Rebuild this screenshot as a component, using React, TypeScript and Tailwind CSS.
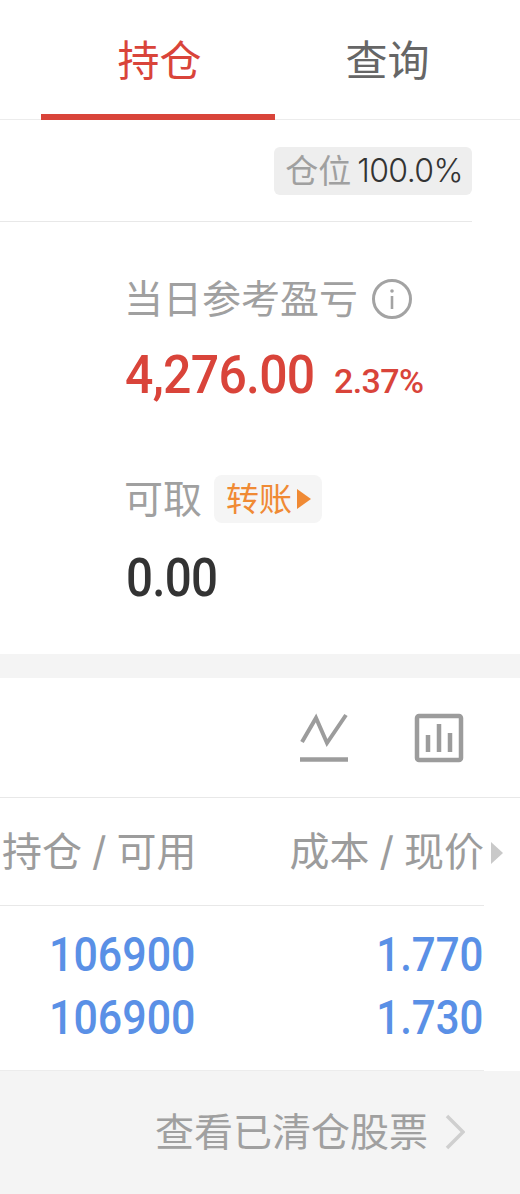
const cjk = "font-['Inter','Noto_Sans_CJK_SC',sans-serif]";
const num = "font-['Roboto','Noto_Sans',sans-serif]";

const InfoIcon = () => (
  <svg width="42" height="42" viewBox="0 0 42 42" fill="none" stroke="#a3a3a3">
    <circle cx="21" cy="21" r="18.5" strokeWidth="3" />
    <circle cx="21" cy="13" r="1.8" fill="#a3a3a3" stroke="none" />
    <path d="M21 18v13" strokeWidth="2.6" />
  </svg>
);

const LineIcon = () => (
  <svg width="50" height="50" viewBox="0 0 50 50" fill="none" stroke="#9c9c9c">
    <path d="M3 29 L17 5 L28 30 L47 2" strokeWidth="4" />
    <path d="M1 46.5h48" strokeWidth="4.5" />
  </svg>
);

const BarIcon = () => (
  <svg width="50" height="50" viewBox="0 0 50 50" fill="none" stroke="#9c9c9c">
    <rect x="3" y="3" width="44" height="44" rx="2" strokeWidth="4.5" />
    <path d="M14 22v17M25 11v28M36 20v19" strokeWidth="4.5" />
  </svg>
);

export default function App() {
  return (
    <div className={`w-[520px] h-[1194px] overflow-hidden bg-white flex flex-col ${cjk}`}>
      <div className="h-[120px] border-b border-[#ececec] flex pl-[41px]">
        <div className="w-[234px] h-[120px] border-b-[6px] border-[#d9443a] flex justify-center pt-[37px] pl-[3px] text-[42px] leading-[48px] text-[#d9443a]">
          持仓
        </div>
        <div className="w-[225px] flex justify-center pt-[37px] text-[42px] leading-[48px] text-[#666666]">
          查询
        </div>
      </div>

      <div className="w-[472px] h-[102px] border-b border-[#e8e8e8] flex justify-end items-start pt-[27px]">
        <div className="w-[198px] h-[48px] rounded-[6px] bg-[#eeeeee] flex items-center justify-center gap-[6px] pl-[2px] whitespace-nowrap">
          <span className="text-[33px] leading-[40px] text-[#a0a0a0]">仓位</span>
          <span className="text-[32px] leading-[40px] text-[#333333] font-light tracking-[-0.6px]">100.0%</span>
        </div>
      </div>

      <div className="h-[432px] pl-[126px] pt-[56px]">
        <div className="flex items-center gap-[13px] h-[42px]">
          <span className="text-[39px] leading-[42px] text-[#a0a0a0] -ml-[2px]">当日参考盈亏</span>
          <InfoIcon />
        </div>
        <div className={`flex items-baseline mt-[25px] h-[60px] text-[#d9443a] ${num}`}>
          <span className="inline-block origin-left scale-x-[0.925] w-[189px] whitespace-nowrap text-[54px] leading-[60px] font-medium tracking-[-0.8px] -ml-[1px]">4,276.00</span>
          <span className="text-[34px] leading-[60px] font-medium tracking-[-0.6px] ml-[20px]">2.37%</span>
        </div>
        <div className="flex items-center mt-[70px] h-[48px]">
          <span className="text-[39px] leading-[48px] text-[#a0a0a0] -ml-[2px]">可取</span>
          <div className="ml-[12px] w-[108px] h-[48px] rounded-[8px] bg-[#f5f5f5] flex items-center pl-[12px]">
            <span className="text-[33px] leading-[40px] text-[#f08a34]">转账</span>
            <svg width="14" height="20" viewBox="0 0 14 20" className="ml-[5px]">
              <path d="M0 0 L14 10 L0 20 Z" fill="#f08a34" />
            </svg>
          </div>
        </div>
        <div className={`mt-[25px] origin-left scale-x-[0.88] text-[54px] leading-[60px] font-medium tracking-[-0.8px] text-[#333333] ${num}`}>
          0.00
        </div>
      </div>

      <div className="h-[24px] bg-[#f4f4f4]" />

      <div className="h-[120px] border-b border-[#e8e8e8] flex justify-end items-start pt-[35px] pr-[56px] gap-[65px]">
        <LineIcon />
        <BarIcon />
      </div>

      <div className="w-[484px] h-[108px] border-b border-[#e8e8e8] flex justify-between items-center relative text-[40px] leading-[48px] text-[#9c9c9c]">
        <span className="ml-[2px] flex">持仓<span className="mx-[10px]">/</span>可用</span>
        <span className="flex">成本<span className="mx-[10px]">/</span>现价</span>
        <svg width="14" height="24" viewBox="0 0 14 24" className="absolute left-[490px] top-[43px]">
          <path d="M1 1 L13 12 L1 23 Z" fill="#c9c9c9" />
        </svg>
      </div>

      <div className={`w-[484px] h-[165px] border-b border-[#ececec] pt-[17px] text-[#5a90e6] text-[48px] leading-[63px] font-medium ${num}`}>
        <div className="flex justify-between pl-[49px] pr-[1px]">
          <span className="inline-block origin-left scale-x-[0.895]">106900</span>
          <span className="inline-block origin-right scale-x-[0.875]">1.770</span>
        </div>
        <div className="flex justify-between pl-[49px] pr-[1px]">
          <span className="inline-block origin-left scale-x-[0.895]">106900</span>
          <span className="inline-block origin-right scale-x-[0.875]">1.730</span>
        </div>
      </div>

      <div className="flex-1 bg-[#f4f4f4] flex justify-end items-start pt-[37px] pr-[56px]">
        <span className="text-[39px] leading-[48px] text-[#a0a0a0]">查看已清仓股票</span>
        <svg width="20" height="36" viewBox="0 0 20 36" fill="none" className="ml-[17px] mt-[6px] -mr-[1px]">
          <path d="M2 2 L18 18 L2 34" stroke="#cfcfcf" strokeWidth="3.5" />
        </svg>
      </div>
    </div>
  );
}
